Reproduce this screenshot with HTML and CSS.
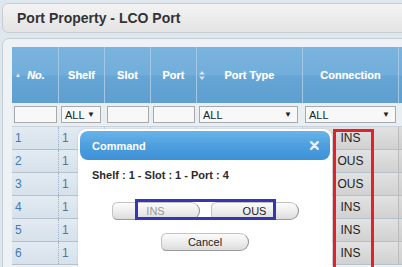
FILE: index.html
```html
<!DOCTYPE html>
<html lang="en">
<head>
    <meta charset="UTF-8">
    <meta name="viewport" content="width=device-width, initial-scale=1.0">
    <title>Port Property - LCO Port</title>
    <link rel="stylesheet" href="styles.css">
</head>
<body>
    <div class="page">
        <div class="title-bar">
            <h1>Port Property - LCO Port</h1>
        </div>

        <div class="panel">
            <div class="grid">
                <div class="row head">
                    <div class="cell sorted"><span class="sort-up">&#9650;</span><em>No.</em></div>
                    <div class="cell">Shelf</div>
                    <div class="cell">Slot</div>
                    <div class="cell">Port</div>
                    <div class="cell">
                        <svg class="sort-both" width="6" height="9" viewBox="0 0 6 9">
                            <path d="M3 0 L6 3.5 L0 3.5 Z M3 9 L6 5.5 L0 5.5 Z" fill="#d2e5f3"/>
                        </svg>
                        Port Type
                    </div>
                    <div class="cell">Connection</div>
                    <div class="cell"></div>
                </div>

                <div class="row filter">
                    <div class="cell"><span class="field"></span></div>
                    <div class="cell"><span class="field select">ALL<i>&#9660;</i></span></div>
                    <div class="cell"><span class="field"></span></div>
                    <div class="cell"><span class="field"></span></div>
                    <div class="cell"><span class="field select">ALL<i>&#9660;</i></span></div>
                    <div class="cell"><span class="field select">ALL<i>&#9660;</i></span></div>
                    <div class="cell"></div>
                </div>

                <div class="row data"><div class="cell num">1</div><div class="cell">1</div><div class="cell"></div><div class="cell"></div><div class="cell"></div><div class="cell conn">INS</div><div class="cell gray"></div></div>
                <div class="row data"><div class="cell num">2</div><div class="cell">1</div><div class="cell"></div><div class="cell"></div><div class="cell"></div><div class="cell conn">OUS</div><div class="cell gray"></div></div>
                <div class="row data"><div class="cell num">3</div><div class="cell">1</div><div class="cell"></div><div class="cell"></div><div class="cell"></div><div class="cell conn">OUS</div><div class="cell gray"></div></div>
                <div class="row data"><div class="cell num">4</div><div class="cell">1</div><div class="cell"></div><div class="cell"></div><div class="cell"></div><div class="cell conn">INS</div><div class="cell gray"></div></div>
                <div class="row data"><div class="cell num">5</div><div class="cell">1</div><div class="cell"></div><div class="cell"></div><div class="cell"></div><div class="cell conn">INS</div><div class="cell gray"></div></div>
                <div class="row data"><div class="cell num">6</div><div class="cell">1</div><div class="cell"></div><div class="cell"></div><div class="cell"></div><div class="cell conn">INS</div><div class="cell gray"></div></div>
            </div>
        </div>

        <div class="dialog">
            <div class="dialog-title">
                <span>Command</span>
                <svg class="close" width="9" height="9" viewBox="0 0 9 9">
                    <path d="M1.2 1.2 L7.8 7.8 M7.8 1.2 L1.2 7.8" stroke="#e4f0f9" stroke-width="2.4" stroke-linecap="round"/>
                </svg>
            </div>
            <div class="dialog-body">
                <p class="target">Shelf : 1 - Slot : 1 - Port : 4</p>
                <div class="btns">
                    <button class="btn off">INS</button>
                    <button class="btn">OUS</button>
                </div>
                <div class="btns">
                    <button class="btn">Cancel</button>
                </div>
            </div>
        </div>

        <div class="mark mark-red"></div>
        <div class="mark mark-blue"></div>
    </div>
</body>
</html>
```

FILE: styles.css
```css
* {
    margin: 0;
    padding: 0;
    box-sizing: border-box;
}

body {
    font-family: "Liberation Sans", Arial, sans-serif;
    background: #dfe7ee;
    color: #333;
    width: 402px;
    height: 267px;
    overflow: hidden;
}

.page {
    position: relative;
    padding: 3px 0 0 2px;
    height: 267px;
}

.title-bar {
    height: 30px;
    margin-right: -12px;
    background: linear-gradient(#f3f3f3, #e4e4e4);
    border: 1px solid #c9cdd1;
    border-radius: 6px;
    display: flex;
    align-items: center;
    padding-left: 14px;
}

.title-bar h1 {
    font-size: 14px;
    font-weight: bold;
    color: #333;
}

.panel {
    margin-top: 5px;
    margin-right: -12px;
    height: 240px;
    background: #eef2f5;
    border: 1px solid #c5ced6;
    border-radius: 7px;
    padding: 8px 0 0 9px;
    overflow: hidden;
}

.row {
    display: grid;
    grid-template-columns: 47px 46px 46px 46px 106px 96px 80px;
}

.cell {
    position: relative;
    border-right: 1px solid #b5c4d0;
    display: flex;
    align-items: center;
}

/* header */
.head {
    height: 56px;
    background: linear-gradient(#7ab4de 0%, #72aedb 50%, #66a5d4 52%, #5e9fd0 100%);
    color: #fff;
    font-size: 11px;
    font-weight: bold;
}

.head .cell {
    justify-content: center;
    border-right-color: #a3c8e6;
    text-shadow: 0 0 1px rgba(255, 255, 255, 0.4);
}

.head em {
    font-style: italic;
    padding-left: 2px;
}

.sort-up {
    position: absolute;
    left: 3px;
    top: 25px;
    font-size: 6px;
    color: #d8e8f5;
}

.sort-both {
    position: absolute;
    left: 2px;
    top: 24px;
}

/* filter row */
.filter {
    height: 24px;
    background: #e9eef2;
    border-bottom: 1px solid #c8d3dc;
}

.filter .cell {
    border-right: none;
    padding: 0 2px;
}

.field {
    display: flex;
    align-items: center;
    justify-content: space-between;
    width: 100%;
    height: 17px;
    background: #f8f8f8;
    border: 1px solid #a9a9a9;
    font-size: 11px;
    color: #222;
    padding: 0 5px 0 3px;
}

.field i {
    font-style: normal;
    font-size: 8px;
}

.filter .cell:nth-child(2) {
    padding-right: 4px;
}

.filter .cell:nth-child(2) .field {
    width: 40px;
}

.filter .cell:nth-child(5) .field {
    width: 99px;
}

.filter .cell:nth-child(6) .field {
    width: 91px;
}

/* data rows */
.data {
    height: 23px;
    background: linear-gradient(#e3ebf2, #d6e1eb);
    border-bottom: 1px solid #b3c1cd;
    font-size: 12px;
    color: #5a7590;
}

.data .cell {
    padding-left: 3px;
    border-right: 1px solid #c8d4de;
}

.data .num {
    color: #3f7ab6;
    border-right: 1px dotted #9fb2c3;
}

.data .conn {
    justify-content: center;
    padding-left: 0;
    color: #222;
    background: linear-gradient(#e2e2e2, #d1d1d1);
    border-right: 1px solid #bcbcbc;
}

.data .gray {
    background: linear-gradient(#dcdcdc, #cecece);
}

/* dialog */
.dialog {
    position: absolute;
    left: 78px;
    top: 129px;
    width: 254px;
    height: 150px;
    background: #fff;
    border-radius: 8px;
    padding: 2px;
    box-shadow: 0 0 2px rgba(120, 140, 160, 0.4);
}

.dialog-title {
    height: 29px;
    border-radius: 8px;
    background: linear-gradient(#68b4e9, #4c9dde 55%, #3f91d6);
    color: #fff;
    font-size: 11px;
    font-weight: bold;
    display: flex;
    align-items: center;
    justify-content: space-between;
    padding: 0 11px 0 12px;
}

.dialog-body {
    padding: 8px 12px 0;
}

.target {
    font-size: 11px;
    font-weight: bold;
    color: #2b2b2b;
    line-height: 14px;
}

.btns {
    display: flex;
    justify-content: center;
    gap: 11px;
    margin-top: 20px;
}

.btns + .btns {
    margin-top: 13px;
}

.btn {
    width: 88px;
    height: 18px;
    font-family: inherit;
    font-size: 11px;
    color: #222;
    background: linear-gradient(#fbfbfb, #ebebeb 60%, #dcdcdc);
    border: 1px solid #c3c3c3;
    border-right-color: #8e8e8e;
    border-bottom-color: #9a9a9a;
    border-radius: 6px 10px 10px 6px;
}

.btn.off {
    color: #9a9a9a;
}

/* annotation boxes */
.mark {
    position: absolute;
    border: 3px solid;
}

.mark-red {
    left: 333px;
    top: 129px;
    width: 41px;
    height: 150px;
    border-color: #e2222a;
}

.mark-blue {
    left: 135px;
    top: 199px;
    width: 141px;
    height: 21px;
    border-color: #3636b2;
}
```
